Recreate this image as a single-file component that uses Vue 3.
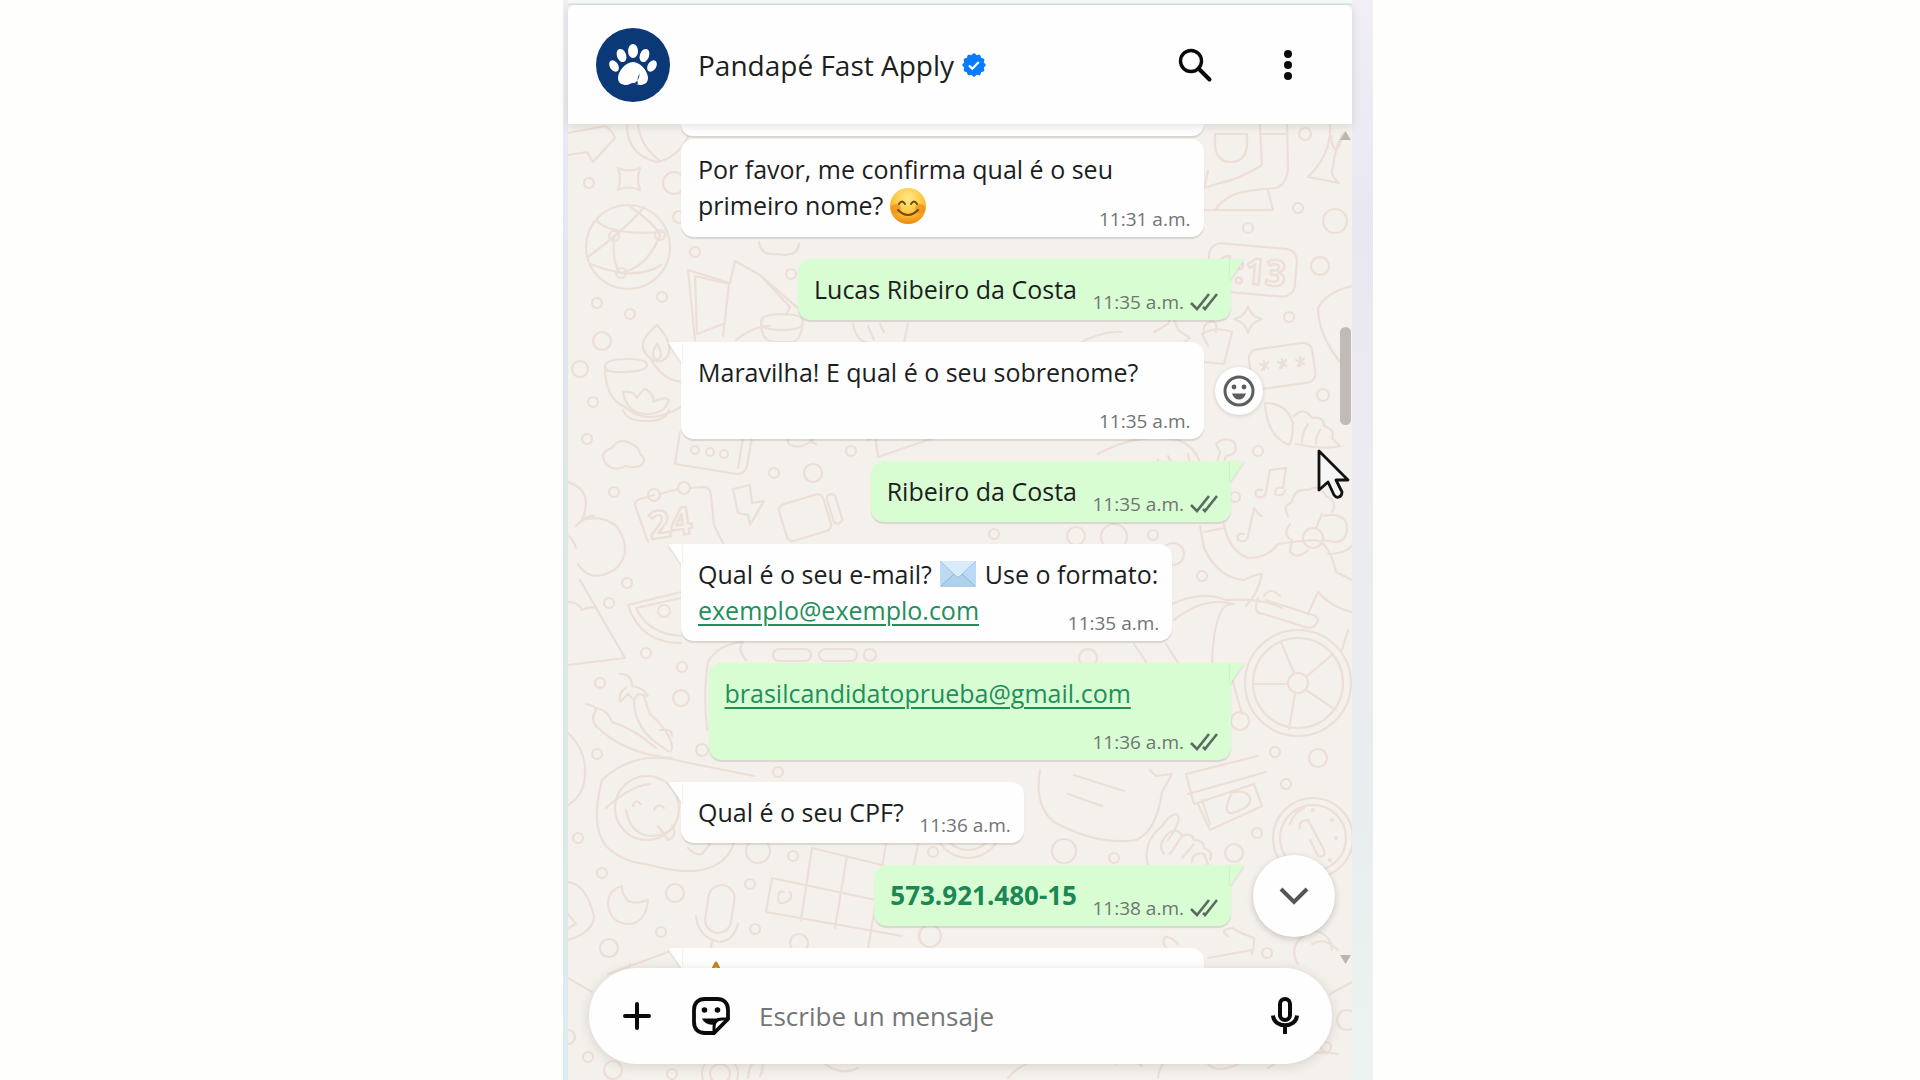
<template>
  <main class="stage">
    <section class="phone">
      <header class="header">
        <svg class="avatar" viewBox="0 0 74 74" aria-hidden="true">
          <circle cx="37" cy="37" r="37" fill="#0b3877"/>
          <g fill="#fff">
            <ellipse cx="37" cy="23" rx="5" ry="7"/>
            <ellipse cx="25.500" cy="27.500" rx="4.600" ry="6.800" transform="rotate(-20 25.5 27.5)"/>
            <ellipse cx="48.500" cy="27.500" rx="4.600" ry="6.800" transform="rotate(20 48.5 27.5)"/>
            <ellipse cx="18" cy="38" rx="4.200" ry="6.200" transform="rotate(-32 18 38)"/>
            <ellipse cx="56" cy="38" rx="4.200" ry="6.200" transform="rotate(32 56 38)"/>
            <path d="M37 34c8 0 15 10 15 16 0 5-4 7-8 7-3 0-5-2-7-2s-4 2-7 2c-4 0-8-2-8-7 0-6 7-16 15-16z"/>
          </g>
          <path d="M43.500 45.500c0 5-2 8-6.500 10.500 2-0.500 4 0 5.500 0.800-2-3-1-7 1-11.300z" fill="#0b3877"/>
        </svg>
        <h1 class="name">Pandapé Fast Apply</h1>
        <svg class="verified" viewBox="0 0 24 24" aria-hidden="true">
          <path :d="badgePath" fill="#0a7cff"/>
          <path d="M7 12.500l3.300 3.200 6.500-6.800" fill="none" stroke="#fff" stroke-width="2.200"/>
        </svg>
        <button class="icon-button search" aria-label="Buscar">
          <svg width="36" height="36" viewBox="0 0 36 36" fill="none" stroke="#0a0a0a">
            <circle cx="14" cy="14" r="10.500" stroke-width="3.400"/>
            <path d="M21.500 21.500L32.500 32.500" stroke-width="4" stroke-linecap="round"/>
          </svg>
        </button>
        <button class="icon-button" aria-label="Menú">
          <svg width="36" height="36" viewBox="0 0 36 36" fill="#0a0a0a">
            <circle cx="18" cy="7" r="4"/>
            <circle cx="18" cy="18" r="4"/>
            <circle cx="18" cy="29" r="4"/>
          </svg>
        </button>
      </header>

      <div class="chat">
        <svg class="doodles" viewBox="0 0 784 956" preserveAspectRatio="xMidYMin slice" aria-hidden="true">
          <circle v-for="(c, i) in dots" :key="i" :cx="c[0]" :cy="c[1]" :r="c[2]"/>
          <path v-for="(d, i) in doodles" :key="'p' + i" :d="d"/>
          <rect x="640" y="122" width="88" height="48" rx="12" transform="rotate(5 684 146)"/>
          <rect x="682" y="222" width="64" height="40" rx="9" transform="rotate(-8 714 241)"/>
          <rect x="214" y="374" width="46" height="38" rx="6" transform="rotate(-17 239 393)"/>
          <rect x="262" y="370" width="9" height="30" rx="4" transform="rotate(-17 266 385)"/>
          <rect x="205" y="525" width="38" height="12" rx="6"/>
          <rect x="251" y="525" width="38" height="12" rx="6"/>
          <rect x="139" y="761" width="26" height="48" rx="13" transform="rotate(9 152 784)"/>
          <text x="80" y="412" font-size="38" transform="rotate(-8 104 396)">24</text>
          <text x="646" y="160" font-size="36" transform="rotate(5 684 146)">1:13</text>
        </svg>

        <div class="messages">
          <div
              class="bubble"
              v-for="(msg, index) in messages"
              :key="index"
              :class="[msg.out ? 'out' : 'in', { tail: msg.tail, cut: msg.cut, wide: msg.wide }]"
          >
            <svg v-if="msg.tail" class="tail-shape" width="14" height="22" viewBox="0 0 14 22" aria-hidden="true">
              <path :d="msg.out ? 'M0 0H12Q14 0 13 2L0 21z' : 'M14 0H2Q0 0 1 2L14 21z'"/>
            </svg>
            <template v-for="(part, idx) in msg.parts" :key="idx">
              <span v-if="part.text">{{ part.text }}</span>
              <strong v-else-if="part.strong">{{ part.strong }}</strong>
              <a v-else-if="part.link" :href="'mailto:' + part.link">{{ part.link }}</a>
              <br v-else-if="part.br">
              <svg v-else-if="part.icon === 'smile'" class="smile" viewBox="0 0 36 36" role="img" aria-label="Sonrisa">
                <defs>
                  <radialGradient id="face" cx="50%" cy="28%" r="72%">
                    <stop offset="0" stop-color="#ffe88b"/>
                    <stop offset="0.6" stop-color="#fbc63c"/>
                    <stop offset="1" stop-color="#f0860c"/>
                  </radialGradient>
                </defs>
                <circle cx="18" cy="18" r="18" fill="url(#face)"/>
                <circle cx="6" cy="21" r="5" fill="#f08a1c" opacity="0.7"/>
                <circle cx="30" cy="21" r="5" fill="#f08a1c" opacity="0.7"/>
                <path d="M9 16q3-5 6 0M21 16q3-5 6 0M8 22q10 10 20 0" fill="none" stroke="#6f4a12" stroke-width="2" stroke-linecap="round"/>
              </svg>
              <svg v-else-if="part.icon === 'mail'" class="mail" viewBox="0 0 36 26" role="img" aria-label="Sobre">
                <path d="M0 0h36v26H0z" fill="#aed0ef"/>
                <path d="M0 0L14 13 0 26zM36 0L22 13 36 26z" fill="#bddaf4"/>
                <path d="M0 0h36L20 15q-2 2-4 0z" fill="#d8ebfb"/>
                <path d="M1 25l13-12M35 25L22 13" fill="none" stroke="#8fb9b5"/>
                <path d="M0 0l16 15q2 2 4 0L36 0" fill="none" stroke="#9fc4e6"/>
              </svg>
              <svg v-else class="warning" viewBox="0 0 36 36" role="img" aria-label="Aviso">
                <path d="M18 2L34 33H2z" fill="#ffd54a" stroke="#c08a1c" stroke-width="3" stroke-linejoin="round"/>
              </svg>
            </template>
            <template v-if="msg.time">
              <span class="meta-space"></span>
              <span class="meta">
                {{ msg.time }}
                <svg v-if="msg.out" width="28" height="20" viewBox="0 0 28 20" fill="none" stroke="#5b6b60" stroke-width="2.600" aria-hidden="true">
                  <path d="M1 11l6 6L19 2M13 15l2 2L27 2"/>
                </svg>
              </span>
            </template>
            <button v-if="msg.react" class="react" aria-label="Reaccionar">
              <svg width="32" height="32" viewBox="0 0 32 32">
                <circle cx="16" cy="16" r="14" fill="none" stroke="#5c5e5e" stroke-width="3"/>
                <circle cx="11" cy="12" r="2.400" fill="#5c5e5e"/>
                <circle cx="21" cy="12" r="2.400" fill="#5c5e5e"/>
                <path d="M9 18.500h14q-2 6-7 6t-7-6z" fill="#5c5e5e"/>
              </svg>
            </button>
          </div>
        </div>

        <div class="scrollbar" aria-hidden="true">
          <svg width="11" height="9" viewBox="0 0 11 9"><path d="M5.500 0L11 9H0z"/></svg>
          <div class="track"><div class="thumb" :style="{ top: scrollTop + '%', height: scrollSize + '%' }"></div></div>
          <svg width="11" height="9" viewBox="0 0 11 9"><path d="M0 0h11L5.500 9z"/></svg>
        </div>

        <button class="scroll-down" aria-label="Bajar">
          <svg width="30" height="20" viewBox="0 0 30 20" fill="none" stroke="#555757" stroke-width="4">
            <path d="M2 3l13 13L28 3"/>
          </svg>
        </button>

        <form class="composer" @submit.prevent>
          <button type="button" class="icon-button" aria-label="Adjuntar">
            <svg width="28" height="28" viewBox="0 0 28 28" stroke="#0a0a0a" stroke-width="4" stroke-linecap="round">
              <path d="M14 2v24M2 14h24"/>
            </svg>
          </button>
          <button type="button" class="icon-button sticker" aria-label="Stickers">
            <svg width="38" height="38" viewBox="0 0 38 38" fill="none" stroke="#0a0a0a" stroke-width="3.800">
              <path d="M13 2h12c7 0 11 4 11 11v9L22 36h-9C6 36 2 32 2 25V13C2 6 6 2 13 2z"/>
              <path d="M22 36v-6c0-6 3-8 8-8h6" stroke-width="3"/>
              <path d="M10 21.500h18l-6 6q-9 1-12-6z" fill="#0a0a0a" stroke="none"/>
              <circle cx="12.500" cy="13" r="2.800" fill="#0a0a0a" stroke="none"/>
              <circle cx="25.500" cy="13" r="2.800" fill="#0a0a0a" stroke="none"/>
            </svg>
          </button>
          <input v-model="draft" type="text" placeholder="Escribe un mensaje" aria-label="Escribe un mensaje">
          <button type="button" class="icon-button" aria-label="Grabar">
            <svg width="28" height="38" viewBox="0 0 28 38" fill="none" stroke="#0a0a0a" stroke-width="4">
              <rect x="9" y="2" width="10" height="21" rx="5"/>
              <path d="M2 18.500c1 13 23 13 24 0M14 28v9"/>
            </svg>
          </button>
        </form>

        <svg class="cursor" width="34" height="50" viewBox="0 0 34 50" aria-hidden="true">
          <path d="M2 2v39l9-8 6 13q2 3 5 2t3-5l-6-12h12z" fill="#f6f5f6" stroke="#111" stroke-width="2.800" stroke-linejoin="round"/>
        </svg>
      </div>
    </section>
  </main>
</template>

<script setup>
import { ref } from 'vue';

const draft = ref('');
const scrollTop = ref(23);
const scrollSize = ref(12);

const messages = ref([
  { cut: true, wide: true, parts: [] },
  { parts: [{ text: 'Por favor, me confirma qual é o seu primeiro nome? ' }, { icon: 'smile' }], time: '11:31 a.m.' },
  { out: true, tail: true, parts: [{ text: 'Lucas Ribeiro da Costa' }], time: '11:35 a.m.' },
  { tail: true, react: true, parts: [{ text: 'Maravilha! E qual é o seu sobrenome?' }], time: '11:35 a.m.' },
  { out: true, tail: true, parts: [{ text: 'Ribeiro da Costa' }], time: '11:35 a.m.' },
  {
    tail: true,
    parts: [
      { text: 'Qual é o seu e-mail? ' }, { icon: 'mail' }, { text: ' Use o formato:' },
      { br: true }, { link: 'exemplo@exemplo.com' }
    ],
    time: '11:35 a.m.'
  },
  { out: true, tail: true, parts: [{ link: 'brasilcandidatoprueba@gmail.com' }], time: '11:36 a.m.' },
  { tail: true, parts: [{ text: 'Qual é o seu CPF?' }], time: '11:36 a.m.' },
  { out: true, tail: true, parts: [{ strong: '573.921.480-15' }], time: '11:38 a.m.' },
  { tail: true, wide: true, parts: [{ icon: 'warning' }] }
]);

// scalloped edge of the verified badge
const badgePath = Array.from({ length: 48 }, (_, i) => {
  const a = (i / 48) * Math.PI * 2;
  const r = 11 + Math.cos(a * 12) * 0.9;
  return `${i ? 'L' : 'M'}${(12 + r * Math.cos(a)).toFixed(2)} ${(12 + r * Math.sin(a)).toFixed(2)}`;
}).join('') + 'Z';

const dots = [
  [21, 59, 5], [106, 59, 11], [111, 93, 6], [127, 128, 5], [29, 179, 5], [62, 190, 5], [94, 173, 5], [34, 217, 9],
  [12, 245, 8], [25, 278, 5], [19, 315, 5], [206, 349, 5], [245, 349, 9], [283, 327, 5], [46, 368, 5], [223, 150, 5],
  [59, 459, 5], [41, 479, 5], [78, 529, 5], [114, 543, 5], [32, 559, 5], [113, 574, 8], [29, 630, 5], [134, 626, 6],
  [302, 531, 6], [10, 714, 5], [34, 749, 5], [107, 769, 9], [182, 760, 5], [190, 727, 12], [225, 732, 5], [93, 808, 5],
  [41, 824, 9], [187, 805, 5], [231, 819, 9], [20, 933, 5], [45, 946, 9], [104, 950, 5], [210, 648, 5], [0, 913, 7],
  [737, 10, 6], [730, 84, 5], [767, 97, 12], [680, 104, 5], [752, 142, 9], [721, 193, 5], [755, 271, 6], [690, 327, 5],
  [667, 373, 5], [634, 452, 5], [520, 534, 9], [672, 597, 9], [707, 628, 5], [750, 634, 9], [496, 727, 12],
  [546, 734, 5], [666, 729, 9], [689, 709, 5], [718, 660, 5], [699, 829, 5], [779, 896, 10], [758, 923, 5],
  [508, 412, 9], [426, 410, 5], [605, 430, 11], [546, 413, 13], [585, 411, 5], [365, 728, 5], [362, 812, 11],
  [60, 123, 42], [46, 112, 5], [92, 111, 5], [53, 149, 5], [79, 684, 32], [730, 559, 53], [730, 559, 45], [730, 559, 10],
  [745, 714, 40], [745, 714, 33], [127, 326, 4], [142, 328, 4], [156, 330, 4], [96, 487, 6], [745, 414, 10],
  [86, 371, 6], [116, 364, 6], [152, 950, 18], [152, 950, 10], [400, 700, 34], [400, 700, 26], [745, 686, 1], [768, 714, 1],
  [764, 696, 1], [762, 736, 1]
];

const doodles = [
  // arrow, egg and sparkles
  'M0 9L37 2Q44 6 47 14L25 38 19 28 0 31', 'M59 1q0 30 30 37 20-4 31-25M70 0q2 22 22 37',
  'M50 44q11 5 22 0-4 11 0 22-11-5-22 0 4-11 0-22z', 'M680 182q3 11 14 13-11 3-14 14-3-11-14-14 11-2 14-13z',
  // globe
  'M28 96q14 16 68 12M20 133q40-30 56-50M46 112q-2 30 7 37M92 111q-12 32-39 38M60 81q28 20 32 30M22 140q15 6 31 9 26 2 40-8',
  // cup and trumpet
  'M647 10h32v12q-2 16-16 16-14 0-16-16zM692 1l2 40q-22 14-42 18l-16 5 4-17M692 10h27M719 0l1 46q-2 14-11 18-34 2-44 7-12 6-18 15M700 66l5 20h-70',
  'M762 0q2 30-22 53l31 6q-10-8-6-16 2-20 10-34M764 12q-2 8 4 14 6-6 5-14',
  // cards and bowl
  'M120 146l7 70M120 146l42 13 5-22 25 14 40 35M127 152l34 8-6 52M127 152l2 58 26-10M192 151l30 32-4 8M168 216q18-14 34-14',
  'M193 198q0-8 21-8t21 8-21 8-21-8zM193 198q0 20 14 20h18q8-2 10-20', 'M191 118q2 14 18 12 20 4 22-10',
  'M285 200q4 18 14 18M340 200l-4 18M300 202l6 14M312 200l4 8M586 208l14-8 4-10 6 16 12 8-8 6M510 220q26-14 44-12',
  // diya lamp
  'M89 201q-22 18-10 30 10 12 20 2 8-12-10-32zM89 220q-8 12 0 16 8-4 0-16zM37 243q0-8 22-8 20 0 20 6 0 6-21 7-21 1-21-5zM37 243q0 32 20 40 22 20 56 0M83 236l4 6q10 14 26 16M55 286q4 12 26 11 16 0 20-11M55 268q10-2 14 6 8-12 10-8 8 6 6 12 12-6 16-2-4 14-22 14-20 0-24-22z',
  'M640 222l-6-12q14-8 30-2l-8 32-20-2M636 210q-2-10 6-12t6 10',
  'M692 240l8 4M700 238l-6 8M696 237v9M710 238l8 4M718 236l-6 8M714 235v9M728 236l8 4M736 234l-6 8M732 233v9',
  // clouds, phone, calendar
  'M38 340q-8-12 6-16 8-12 20-4 8 4 8 10 8 6 0 12-8 2-14 0-12 6-20-2z', 'M112 308l-5 32 62 10q8 0 10-8l6-34M176 308l-6 36',
  'M68 384q-4-8 8-10l10-3M92 370l18-5M122 364l14-1q6 0 7 8l3 30 10 20M68 384l12 34', 'M165 365l17-4 2 18 12-2-14 24-2-10-10-2z',
  'M0 358q26 8 14 38 22-6 36 8 16 26-4 42-24 14-36-6M8 402q12-12 18-10M0 412q6 4 8 12',
  'M213 300l8 20q12 8 28-8M240 306q0 12 8 14M306 305l4 28 70-24M300 316q18-10 26-10',
  // snail shell, notes, flowers
  'M697 279q22 0 28 20 0 16-4 22-22-8-24-42zM726 292q10-10 18 2 12-2 12 8 12 4 8 12l8 8q-16 4-44-2M740 300q-6 8-6 20M752 306q-4 6-4 14',
  'M648 320q8-8 18-2 6 12-8 14l-4 12-6-2 4-14z', 'M694 366q-8-2-6 6 8 4 10-4l4-22 16-2-3 20q-8-2-8 6 8 4 10-4M676 410q-8-2-6 6 8 4 10-4l6-28q6 8 8 8',
  'M720 392q-6-10 4-14 2-14 16-12 12-6 18 6 12 6 6 16M722 400q-8 12 2 16l-2 12q8 8 18-2M756 392q16-4 22 6 4 18-10 20l-14-2M748 404l6-14M760 430q16 0 24-8',
  'M784 162q-26 6-34 22 0 26 22 54', 'M530 330q40-22 80-14 16 6 22 22M590 336l4 10M600 332l6 12M620 330l2 12',
  'M632 402l4 22q14 30 40 32 12-6 18-6M636 408l20-4M656 400q4 26 24 34 20 0 30-14 30-4 38-4 14 4 20 32l16 8M694 450q-4 20-16 32M740 490l10-22q14 16 34 20',
  // fruit, peppers
  'M12 456l45 78-57 7M60 481l53-13M60 481q12 38 53 38M68 484l45-10M68 484q12 26 45 28M0 478q10 0 14 8 8-4 14-2',
  'M52 550q12 0 12 12 12 2 16 10l-10-2-4 6-6-6-8 8q-2-10 6-14M66 576q0 30 30 48 8 8 8-2-2-14-22-32-4-10-6-18M18 580q10 2 10 6-6 8 0 16M28 584q12 2 16 14 24 8 44 26M28 602q28 28 76 32M92 606q12-2 12 6',
  'M139 606q-4-40 1-68 10-18 35-20-6 8 3 18M82 660q-20 2-44 24M34 656q34-32 82-18l70 14M0 609q18 16 17 40 0 22-17 32',
  // smiley blob
  'M34 656q-12 46 4 66 16 16 40 18 34 10 56 6 26-6 32-28M58 686q4 24 24 26 20 0 26-14M65 682q2-8 8-2M86 686q4-8 10-2M90 702l10 14q10-4 4-14M120 724q8 8 14 6l8-10',
  // wheel spokes and motorbike
  'M713 518l13 31M765 530l-27 23M685 560h35M768 586l-30-20M721 605l6-36',
  'M604 480q30-14 54-4 36-2 56 8M606 496q30-24 60-16M566 520l12 18M598 520l14 22M644 540q2-60 20-60M690 474q-6 16 6 16l44 14q8 0 10-8l-2-4-50-16M696 472q6-10 16 0M780 506l-6 20M660 540l14 50',
  // speech bubble, chocolate and hand
  'M472 646q-6 36 14 52 44 24 82 18 20-8 26-48l10-18-16 2-6-6M506 651l50 16M500 670l34 12M618 650l72-18M620 670l78-22M618 650l8 30 60-20 8 22-52 24-12-26M634 676l8 24M664 668q16-2 18 6t-14 14-4-20',
  'M580 742q-6-24 14-40 6-10 14-12 8 4-8 26M596 730q-8-10 6-22 8-4 12 4 10-4 12 4 10 0 10 8 10 4 6 12M602 730l12-18M614 734l12-14M624 738q0-10 12-8l4 10',
  'M732 704q-2-8 8-8l16 30q2 8-6 6l-8-16M722 700q4-12 14-16',
  // moon, microphone, board
  'M54 762q-14 4-14 18 2 20 22 20 16-2 18-24-18 6-22-2-4-4-4-12zM128 792q2 22 24 26 14-2 18-18M144 818l-2 10',
  'M204 754l132 28M198 788l136 24M204 754l-6 34M244 724l-11 72M279 732l-12 72M244 724l74 18M318 720l-18 104M216 768q-6-2-6 6t8 4 4-10M350 720l-6 30',
  'M0 758q18 2 26 34 0 16-26 24M0 790l8 10-8 4M0 854l24 14M40 850l60-22M60 846l2-6',
  // foot of the wallpaper
  'M660 812q-10-6 4-8 10 6 22 10 0 10-2 16M640 834l44-8M730 840q-12-20 14-34 20 4 20 20M744 820q12-8 26 6M762 870l22-12M610 820q-10-10-14-6-2 12 8 12M440 954q16-20 54-22M590 954q2-20 20-20M180 954q2-20 14-18 2 10-2 16M250 934q20 20 40 10M548 940l14-6 12 8M640 940q10 10 30 0M700 944q30-20 70-14'
];
</script>

<style>
body {
  margin: 0;
  background: #fefefd;
}
</style>

<style scoped>
.stage {
  display: flex;
  justify-content: center;
  min-height: 100vh;
  background: #fefefd;
  font-family: "Open Sans", "Noto Sans", sans-serif;
  color: #1c1e1e;
}

.phone {
  position: relative;
  display: flex;
  flex-direction: column;
  width: 100%;
  max-width: 784px;
  height: 100vh;
  padding-top: 5px;
  box-sizing: border-box;
  background: linear-gradient(#f4fbf8 0 3px, #d5e8df 4px 5px, #f4f0eb 5px);
}

.phone::before,
.phone::after {
  content: "";
  position: absolute;
  top: 0;
  bottom: 0;
}

.phone::before {
  right: 100%;
  width: 5px;
  background: linear-gradient(#eeeef4, #e0e5e9 30%, #dde8e6 70%, #dcecee);
}

.phone::after {
  left: 100%;
  width: 21px;
  background: linear-gradient(#f1eef5, #e9e8f0 20%, #ebebf0 45%, #e9edee 75%, #edf3f1);
}

button {
  border: none;
  padding: 0;
  cursor: pointer;
  font: inherit;
}

svg {
  display: block;
}

.header {
  position: relative;
  z-index: 2;
  display: flex;
  align-items: center;
  height: 119px;
  padding: 0 46px 0 28px;
  box-sizing: border-box;
  flex-shrink: 0;
  background: #fefefe;
  border-radius: 6px 6px 0 0;
  box-shadow: 0 2px 8px rgba(60, 50, 60, 0.14);
}

.avatar {
  width: 74px;
  height: 74px;
  margin-right: 28px;
}

.name {
  margin: 0;
  font-size: 28px;
  line-height: 40px;
  font-weight: 400;
  white-space: nowrap;
}

.verified {
  width: 24px;
  height: 24px;
  margin-left: 8px;
}

.icon-button {
  display: grid;
  place-items: center;
  background: transparent;
}

.search {
  margin: 0 57px 0 auto;
}

.chat {
  position: relative;
  display: flex;
  flex-direction: column;
  flex: 1;
  min-height: 0;
  background: #f4f0eb;
  overflow: hidden;
}

.doodles {
  position: absolute;
  inset: 0;
  width: 100%;
  height: 100%;
  fill: none;
  stroke: #ecdfd8;
  stroke-width: 2.2;
  stroke-linejoin: round;
  stroke-linecap: round;
  font-weight: 700;
}

.messages {
  position: relative;
  display: flex;
  flex-direction: column;
  flex: 1;
  min-height: 0;
  gap: 22px;
  padding: 0 121px 0 113px;
  overflow: hidden;
}

.bubble {
  position: relative;
  flex-shrink: 0;
  max-width: 95%;
  padding: 12px 14px 13px 17px;
  box-sizing: border-box;
  border-radius: 13px;
  font-size: 25px;
  line-height: 36px;
  box-shadow: 0 2px 1px rgba(60, 50, 40, 0.14);
}

.in {
  align-self: flex-start;
  background: #fefefe;
}

.out {
  align-self: flex-end;
  padding-left: 16px;
  background: #d8fdd2;
}

.in.tail {
  border-top-left-radius: 0;
}

.out.tail {
  border-top-right-radius: 0;
}

.wide {
  width: 95%;
}

.cut {
  height: 12px;
  padding: 0;
  margin-bottom: -19px;
  border-radius: 0 0 13px 13px;
}

.tail-shape {
  position: absolute;
  top: 0;
  filter: drop-shadow(0 1px 1px rgba(60, 50, 40, 0.16));
}

.in .tail-shape {
  right: 100%;
  margin-right: -1px;
  fill: #fefefe;
}

.out .tail-shape {
  left: 100%;
  margin-left: -1px;
  fill: #d8fdd2;
}

.bubble a {
  color: #1f8f5c;
  text-decoration: underline;
  text-decoration-thickness: 2px;
  text-underline-offset: 4px;
}

.bubble strong {
  font-size: 26px;
  font-weight: 700;
  color: #1b8755;
}

.smile,
.mail,
.warning {
  display: inline-block;
  width: 36px;
}

.smile,
.warning {
  height: 36px;
  vertical-align: -9px;
}

.mail {
  height: 26px;
  margin: 0 2px;
  vertical-align: -3px;
}

.meta-space {
  display: inline-block;
  width: 106px;
}

.out .meta-space {
  width: 140px;
}

.meta {
  position: absolute;
  right: 13px;
  bottom: 6px;
  display: flex;
  align-items: center;
  gap: 6px;
  font-size: 19px;
  line-height: 24px;
  color: #717473;
  white-space: nowrap;
}

.react {
  position: absolute;
  left: 100%;
  top: 50%;
  display: grid;
  place-items: center;
  width: 48px;
  height: 48px;
  margin-left: 11px;
  transform: translateY(-50%);
  border-radius: 50%;
  background: #fefefe;
  box-shadow: 0 1px 4px rgba(60, 50, 40, 0.18);
}

.scrollbar {
  position: absolute;
  top: 7px;
  right: 1px;
  bottom: 116px;
  display: flex;
  flex-direction: column;
  width: 11px;
  fill: #b9b5b1;
}

.track {
  position: relative;
  flex: 1;
}

.thumb {
  position: absolute;
  width: 100%;
  border-radius: 6px;
  background: #c0bbb7;
}

.scroll-down {
  position: absolute;
  right: 17px;
  bottom: 143px;
  display: grid;
  place-items: center;
  width: 82px;
  height: 82px;
  border-radius: 50%;
  background: #fefefe;
  box-shadow: 0 2px 6px rgba(60, 50, 40, 0.24);
}

.composer {
  position: relative;
  display: flex;
  align-items: center;
  height: 96px;
  margin: 0 20px 16px 21px;
  padding: 0 33px 0 34px;
  box-sizing: border-box;
  flex-shrink: 0;
  border-radius: 48px;
  background: #fefefe;
  box-shadow: 0 2px 12px rgba(60, 50, 40, 0.16);
}

.sticker {
  margin: 0 27px 0 41px;
}

.composer input {
  flex: 1;
  min-width: 0;
  border: none;
  outline: none;
  background: transparent;
  font: inherit;
  font-size: 26px;
  line-height: 36px;
  color: #1c1e1e;
}

.composer input::placeholder {
  color: #747676;
  opacity: 1;
}

.cursor {
  position: absolute;
  left: 95%;
  top: 34%;
  margin-left: 4px;
  pointer-events: none;
}
</style>
